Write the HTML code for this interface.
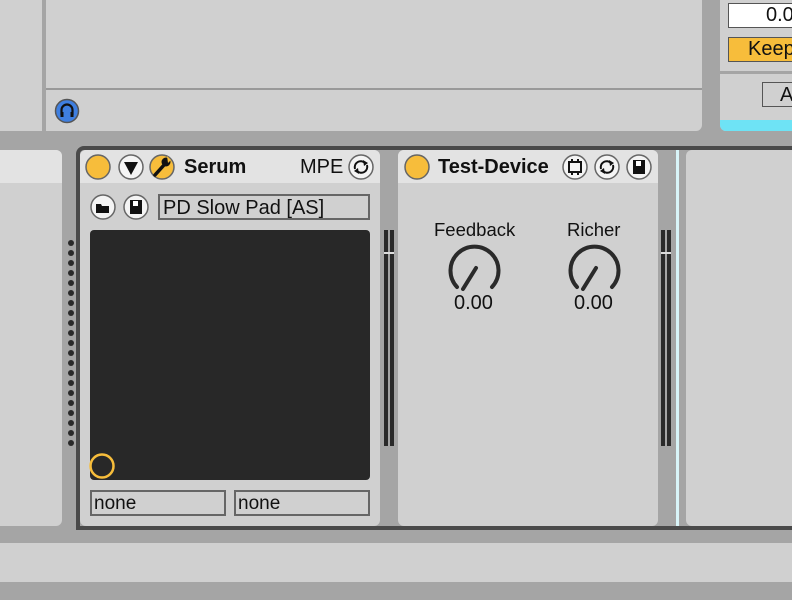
<!DOCTYPE html>
<html><head><style>
body{margin:0;width:792px;height:600px;background:#a5a5a5;position:relative;overflow:hidden;font-family:"Liberation Sans",sans-serif;color:#111}
div{position:absolute;box-sizing:border-box}
.p{background:#d0d0d0}
.t{font-size:18px;white-space:nowrap}
</style></head><body>
<div class="p" style="left:0;top:0;width:42px;height:131px"></div>
<div class="p" style="left:46px;top:0;width:656px;height:131px;border-bottom-right-radius:6px"></div>
<div style="left:46px;top:88px;width:656px;height:2px;background:#999"></div>
<div class="p" style="left:720px;top:0;width:72px;height:131px;border-bottom-left-radius:6px;overflow:hidden">
 <div style="left:8px;top:3px;width:70px;height:25px;background:#fff;border:1px solid #555"></div>
 <div class="t" style="left:46px;top:4px;font-size:20px">0.0</div>
 <div style="left:8px;top:37px;width:70px;height:25px;background:#f7bd3b;border:1px solid #555"></div>
 <div class="t" style="left:28px;top:38px;font-size:20px">Keep</div>
 <div style="left:0;top:71px;width:72px;height:3px;background:#a5a5a5"></div>
 <div style="left:42px;top:82px;width:40px;height:25px;border:1px solid #555"></div>
 <div class="t" style="left:60px;top:84px;font-size:20px">A</div>
 <div style="left:0;top:120px;width:72px;height:11px;background:#6ee3f5"></div>
</div>
<svg style="position:absolute;left:54px;top:98px" width="26" height="26"><circle cx="13" cy="13" r="11.5" fill="#3f7fe0" stroke="#555" stroke-width="1.5"/><path d="M7.5 17 V12 a5.5 5.5 0 0 1 11 0 V17" fill="none" stroke="#111" stroke-width="2.2"/><rect x="6.5" y="14" width="3" height="5" fill="#111"/><rect x="16.5" y="14" width="3" height="5" fill="#111"/></svg>

<div class="p" style="left:0;top:150px;width:62px;height:376px;border-top-right-radius:6px;border-bottom-right-radius:6px;overflow:hidden"><div style="left:0;top:0;width:62px;height:33px;background:#e3e3e3"></div></div>
<svg style="position:absolute;left:64px;top:236px" width="14" height="215">
<g fill="#2a2a2a"><circle cx="7" cy="7" r="3"/><circle cx="7" cy="17" r="3"/><circle cx="7" cy="27" r="3"/><circle cx="7" cy="37" r="3"/><circle cx="7" cy="47" r="3"/><circle cx="7" cy="57" r="3"/><circle cx="7" cy="67" r="3"/><circle cx="7" cy="77" r="3"/><circle cx="7" cy="87" r="3"/><circle cx="7" cy="97" r="3"/><circle cx="7" cy="107" r="3"/><circle cx="7" cy="117" r="3"/><circle cx="7" cy="127" r="3"/><circle cx="7" cy="137" r="3"/><circle cx="7" cy="147" r="3"/><circle cx="7" cy="157" r="3"/><circle cx="7" cy="167" r="3"/><circle cx="7" cy="177" r="3"/><circle cx="7" cy="187" r="3"/><circle cx="7" cy="197" r="3"/><circle cx="7" cy="207" r="3"/></g></svg>
<div style="left:76px;top:146px;width:730px;height:384px;border:4px solid #4a4a4a;border-right:none;border-top-left-radius:8px"></div>

<!-- Serum -->
<div class="p" style="left:80px;top:150px;width:300px;height:376px;border-radius:6px;overflow:hidden">
 <div style="left:0;top:0;width:300px;height:33px;background:#e3e3e3"></div>
</div>
<svg style="position:absolute;left:80px;top:150px" width="300" height="80">
 <circle cx="18" cy="17" r="12" fill="#f7bd3b" stroke="#666" stroke-width="1.5"/>
 <circle cx="51" cy="17" r="12" fill="#f4f4f4" stroke="#666" stroke-width="1.5"/>
 <path d="M44 12 H58 L51 25 Z" fill="#111"/>
 <circle cx="82" cy="17" r="12" fill="#f7bd3b" stroke="#666" stroke-width="1.5"/>
 <path d="M75 25 L84 15" stroke="#111" stroke-width="3.5" stroke-linecap="round"/><circle cx="86" cy="12" r="4.5" fill="#111"/><path d="M87 6 L91 10 L88 13 Z" fill="#f7bd3b"/>
 <circle cx="281" cy="17" r="12" fill="#f4f4f4" stroke="#666" stroke-width="1.5"/>
 <path d="M275 19 a6 6 0 0 1 10 -6 M287 15 a6 6 0 0 1 -10 6" fill="none" stroke="#111" stroke-width="2"/><path d="M283 10 L288 13 L284 16Z M279 24 L274 21 L278 18Z" fill="#111"/>
 <circle cx="23" cy="57" r="12" fill="#f4f4f4" stroke="#666" stroke-width="1.5"/>
 <path d="M16 54 H21 L22 56 H29 V63 H16Z" fill="#111"/>
 <circle cx="56" cy="57" r="12" fill="#f4f4f4" stroke="#666" stroke-width="1.5"/>
 <path d="M50 50 H62 V64 H50Z" fill="#111"/><rect x="53" y="51" width="5" height="5" fill="#fff"/>
</svg>
<div class="t" style="left:184px;top:156px;font-weight:bold;font-size:20px">Serum</div>
<div class="t" style="left:300px;top:156px;font-size:20px">MPE</div>
<div style="left:158px;top:194px;width:212px;height:26px;border:2px solid #666"></div>
<div class="t" style="left:163px;top:197px;font-size:20px">PD Slow Pad [AS]</div>
<div style="left:90px;top:230px;width:280px;height:250px;background:#282828;border-radius:4px"></div>
<svg style="position:absolute;left:88px;top:452px" width="30" height="30"><circle cx="14" cy="14" r="11.5" fill="none" stroke="#f7bd3b" stroke-width="2.5"/></svg>
<div style="left:90px;top:490px;width:136px;height:26px;border:2px solid #666"></div>
<div style="left:234px;top:490px;width:136px;height:26px;border:2px solid #666"></div>
<div class="t" style="left:94px;top:493px;font-size:19px">none</div>
<div class="t" style="left:238px;top:493px;font-size:19px">none</div>

<!-- meters -->
<div style="left:384px;top:230px;width:4px;height:216px;background:#2a2a2a"></div>
<div style="left:390px;top:230px;width:4px;height:216px;background:#2a2a2a"></div>
<div style="left:384px;top:252px;width:10px;height:2px;background:#ddd"></div>
<div style="left:661px;top:230px;width:4px;height:216px;background:#2a2a2a"></div>
<div style="left:667px;top:230px;width:4px;height:216px;background:#2a2a2a"></div>
<div style="left:661px;top:252px;width:10px;height:2px;background:#ddd"></div>

<!-- Test device -->
<div class="p" style="left:398px;top:150px;width:260px;height:376px;border-radius:6px;overflow:hidden">
 <div style="left:0;top:0;width:260px;height:33px;background:#e3e3e3"></div>
</div>
<svg style="position:absolute;left:398px;top:150px" width="260" height="170">
 <circle cx="19" cy="17" r="12" fill="#f7bd3b" stroke="#666" stroke-width="1.5"/>
 <circle cx="177" cy="17" r="12" fill="#f4f4f4" stroke="#666" stroke-width="1.5"/>
 <rect x="171" y="12" width="12" height="10" fill="none" stroke="#111" stroke-width="2"/><path d="M174 9 V12 M180 9 V12 M174 22 V25 M180 22 V25" stroke="#111" stroke-width="2"/>
 <circle cx="209" cy="17" r="12" fill="#f4f4f4" stroke="#666" stroke-width="1.5"/>
 <path d="M203 19 a6 6 0 0 1 10 -6 M215 15 a6 6 0 0 1 -10 6" fill="none" stroke="#111" stroke-width="2"/><path d="M211 10 L216 13 L212 16Z M207 24 L202 21 L206 18Z" fill="#111"/>
 <circle cx="241" cy="17" r="12" fill="#f4f4f4" stroke="#666" stroke-width="1.5"/>
 <path d="M235 10 H247 V24 H235Z" fill="#111"/><rect x="238" y="11" width="5" height="5" fill="#fff"/>
 <g fill="none" stroke="#2a2a2a" stroke-width="4" stroke-linecap="round">
  <path d="M59 137 A24 24 0 1 1 94 137"/><path d="M65 139 L78 118"/>
  <path d="M179 137 A24 24 0 1 1 214 137"/><path d="M185 139 L198 118"/>
 </g>
</svg>
<div class="t" style="left:438px;top:156px;font-weight:bold;font-size:20px">Test-Device</div>
<div class="t" style="left:434px;top:219px;font-size:18.5px">Feedback</div>
<div class="t" style="left:567px;top:219px;font-size:18.5px">Richer</div>
<div class="t" style="left:454px;top:292px;font-size:20px">0.00</div>
<div class="t" style="left:574px;top:292px;font-size:20px">0.00</div>

<div style="left:676px;top:150px;width:3px;height:376px;background:#d8f4f8"></div>
<div class="p" style="left:686px;top:150px;width:106px;height:376px;border-top-left-radius:6px;border-bottom-left-radius:6px"></div>

<div class="p" style="left:0;top:543px;width:792px;height:39px"></div>
</body></html>
